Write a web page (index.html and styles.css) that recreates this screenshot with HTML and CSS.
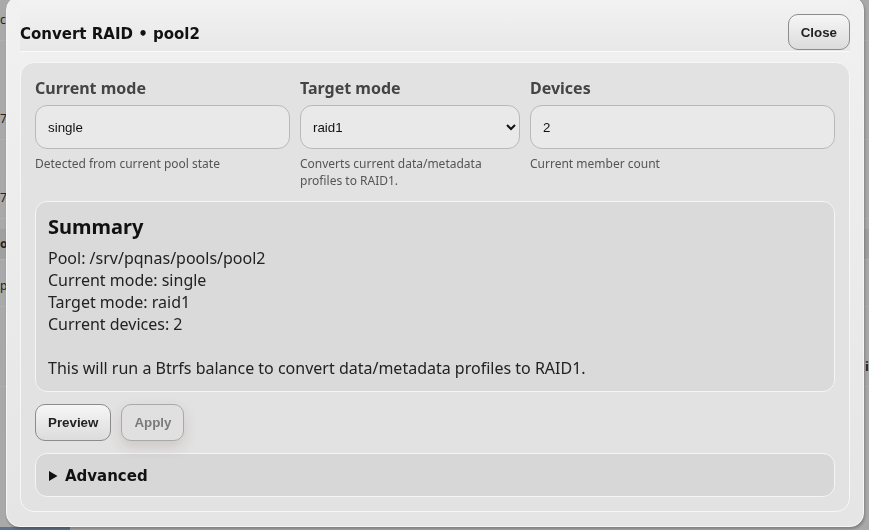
FILE: index.html
```html
<!DOCTYPE html>
<html lang="en">
<head>
  <meta charset="UTF-8">
  <title>Storage pools</title>
  <link rel="stylesheet" href="styles.css">
</head>
<body>
  <div class="page">
    <div class="row top">c</div>
    <div class="row">7</div>
    <div class="row">7</div>
    <div class="row head">o</div>
    <div class="row">p</div>
    <div class="row side">i</div>
    <div class="taskbar"></div>
  </div>

  <div class="overlay">
    <div class="modal">
      <div class="modal-head">
        <h2>Convert RAID • pool2</h2>
        <button class="btn">Close</button>
      </div>

      <div class="panel">
        <div class="fields">
          <div class="field">
            <label>Current mode</label>
            <input class="inp" type="text" value="single" readonly>
            <div class="hint">Detected from current pool state</div>
          </div>
          <div class="field">
            <label>Target mode</label>
            <select class="inp">
              <option>single</option>
              <option selected>raid1</option>
              <option>raid10</option>
            </select>
            <div class="hint">Converts current data/metadata profiles to RAID1.</div>
          </div>
          <div class="field">
            <label>Devices</label>
            <input class="inp" type="text" value="2" readonly>
            <div class="hint">Current member count</div>
          </div>
        </div>

        <div class="summary">
          <h3>Summary</h3>
          <div class="summary-text">Pool: /srv/pqnas/pools/pool2
Current mode: single
Target mode: raid1
Current devices: 2

This will run a Btrfs balance to convert data/metadata profiles to RAID1.</div>
        </div>

        <div class="actions">
          <button class="btn">Preview</button>
          <button class="btn" disabled>Apply</button>
        </div>

        <details class="advanced">
          <summary>Advanced</summary>
          <div class="adv-body">Force flag and soft conversion options.</div>
        </details>
      </div>
    </div>
  </div>
</body>
</html>
```

FILE: styles.css
```css
body { margin:0; background:#f2f2f2; font-family:"Noto Sans", sans-serif; color:#222; }

/* page behind the dialog */
.page { padding-top:0; }
.page .row { height:40px; margin-bottom:38px; border-bottom:1px solid #fbfbfb; font-size:12px; line-height:40px; color:#333; }
.page .row.top { height:40px; margin-bottom:58px; }
.page .row.head { margin-top:-28px; margin-bottom:6px; height:30px; line-height:30px; background:#e6e6e6; font-weight:bold; }
.page .row.side { margin-top:39px; text-align:right; font-weight:bold; font-size:13px; }
.page .taskbar { position:fixed; left:0; bottom:0; width:70px; height:3px; background:#8aa2c8; }

.overlay { position:fixed; inset:0; background:rgba(0,0,0,0.3); }

.modal {
  position:absolute; left:6px; top:-4px; width:858px; height:531px; box-sizing:border-box;
  background:linear-gradient(#f1f1f1, #e5e5e5);
  border:1px solid #f6f6f6;
  border-radius:14px;
  padding:0 13px 14px;
  box-shadow:1px 2px 3px rgba(0,0,0,0.25);
}

.modal-head {
  display:flex; align-items:center; justify-content:space-between;
  padding:17px 0 1px; height:36px;
  background:linear-gradient(#f3f3f3, #e8e8e8);
  border-bottom:1px solid #fafafa;
}
.modal-head h2 { margin:0; padding-top:3px; font-family:"DejaVu Sans", sans-serif; font-size:15px; font-weight:bold; color:#111; }

.btn {
  height:37px; padding:0 12px; border-radius:10px;
  border:1px solid #8c8c8c;
  background:linear-gradient(#f6f6f6, #dcdcdc);
  font-family:"Liberation Sans", Arial, sans-serif; font-size:13.33px; font-weight:bold; color:#222;
}
.modal-head .btn { height:36px; }
.btn:disabled { color:#7a7a7a; border-color:#a9a9a9; background:#e0e0e0; box-shadow:0 6px 14px rgba(110,60,60,0.16); }

.panel {
  margin-top:10px; border:1px solid #f7f7f7; border-radius:14px;
  background:#e2e2e2; padding:14px;
}

.fields { display:grid; grid-template-columns:255px 220px 1fr; gap:10px; }
.field label { display:block; font-size:16px; font-weight:bold; line-height:22px; color:#444; }
.inp {
  display:block; width:100%; box-sizing:border-box; height:44px; margin-top:6px;
  border:1px solid #b9b9b9; border-radius:12px; background:#e9e9e9;
  padding:0 12px; font-family:"Liberation Sans", Arial, sans-serif; font-size:13.33px; color:#111;
}
select.inp { padding-left:8px; }
.hint { margin-top:6px; font-size:12px; line-height:17px; color:#555; }

.summary {
  margin-top:12px; border:1px solid #f5f5f5; border-radius:12px;
  background:#dadada; padding:12px;
}
.summary h3 { margin:0 0 7px; font-size:20px; line-height:26px; color:#111; }
.summary-text { white-space:pre-line; font-size:16px; line-height:22px; color:#222; }

.actions { display:flex; gap:10px; margin-top:12px; }

.advanced {
  margin-top:12px; border:1px solid #f5f5f5; border-radius:12px;
  background:#d7d7d7; padding:0 12px 0 13px;
}
.advanced summary {
  height:42px; line-height:44px; font-family:"DejaVu Sans", sans-serif; font-size:15px; font-weight:bold; color:#111;
}
.adv-body { padding-bottom:12px; font-size:13px; }
```
